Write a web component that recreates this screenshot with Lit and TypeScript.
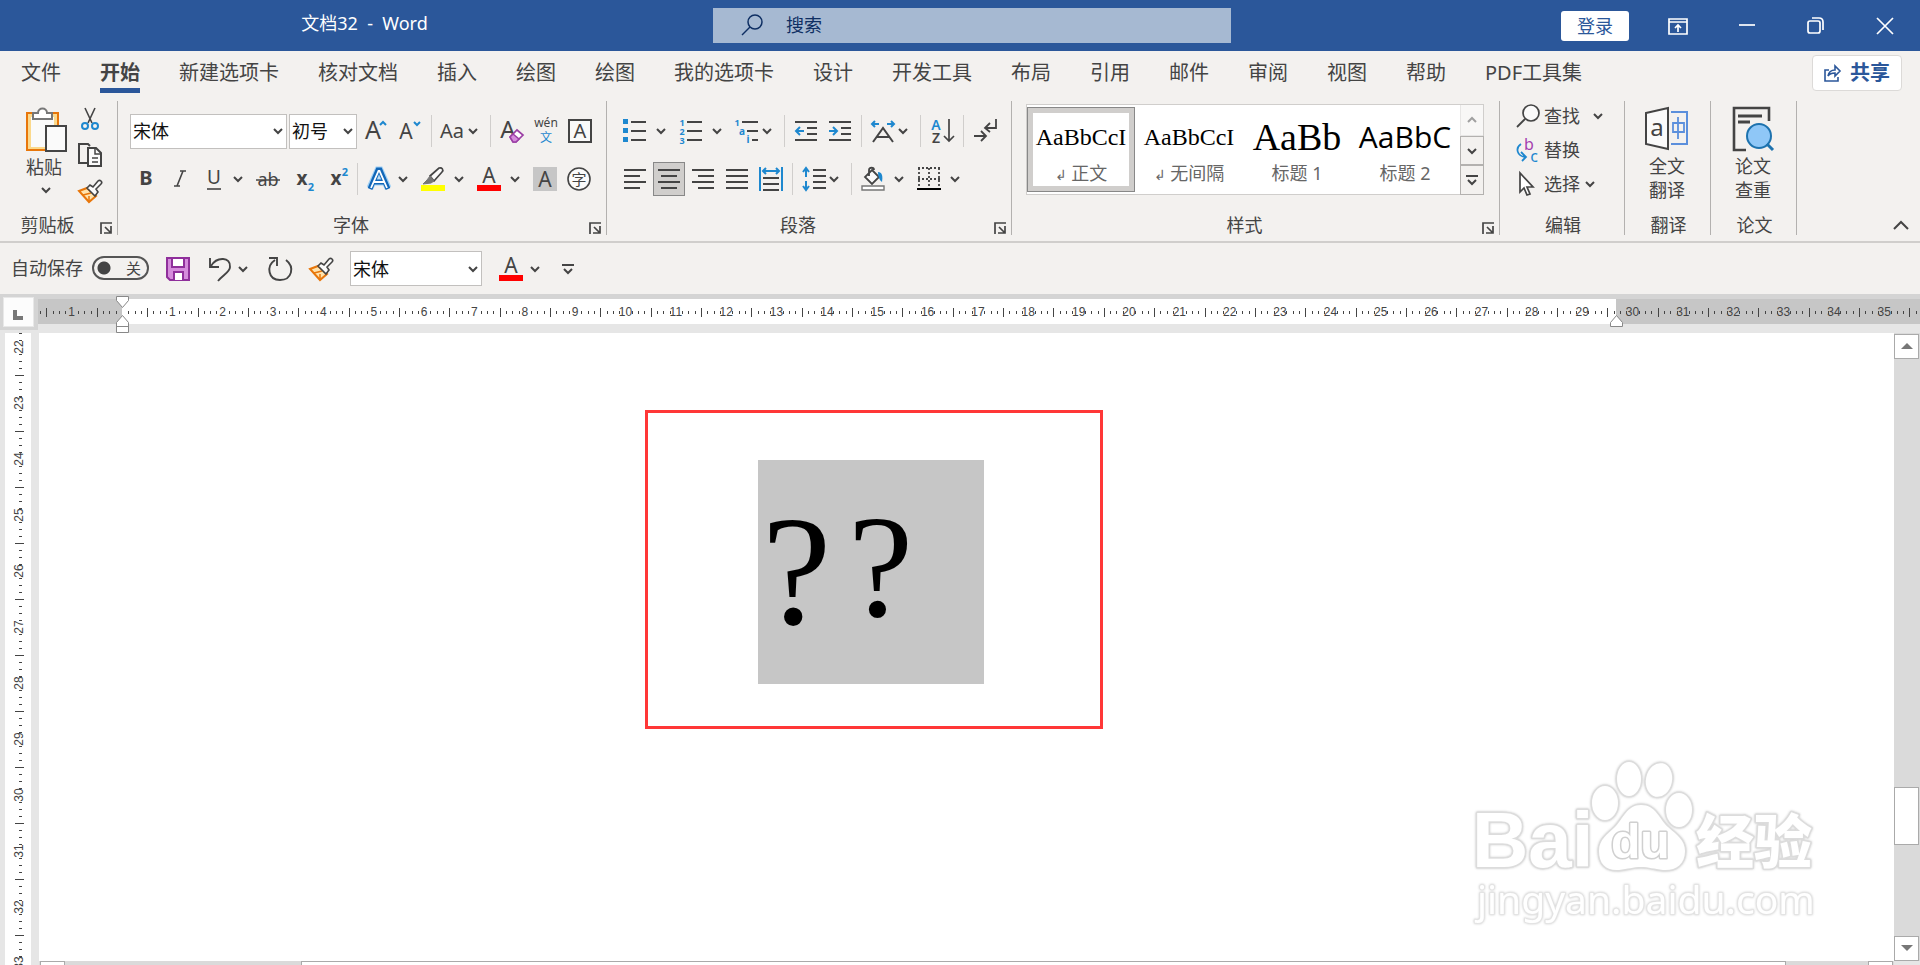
import { LitElement, html, svg, css, type TemplateResult } from "lit";
import { customElement } from "lit/decorators.js";
import { classMap } from "lit/directives/class-map.js";

type Shape = ReturnType<typeof svg>;

const INK = "#444444";
const BLUE = "#1e88cf";

const icon = (body: Shape, w = 24, h = 24) =>
  html`<svg width=${w} height=${h} viewBox="0 0 ${w} ${h}" fill="none" stroke=${INK} stroke-width="2" aria-hidden="true">${body}</svg>`;

const chevron = () => icon(svg`<path d="M2 2l4 4 4-4"/>`, 12, 8);

const letter = (t: string, x: number, y: number, size: number, fill = INK, weight = 400) =>
  svg`<text x=${x} y=${y} font-size=${size} font-weight=${weight} fill=${fill} stroke="none" text-anchor="middle">${t}</text>`;

const lines = (spans: number[][]) => spans.map(([x1, x2, y]) => svg`<path d="M${x1} ${y}H${x2}"/>`);

const ICONS = {
  paste: icon(svg`
    <path d="M2 6h31v37H2z" fill="#fbd98c" stroke="#e8760a" stroke-width="2"/>
    <path d="M6 10h23v30H6z" fill="#fafafa" stroke="none"/>
    <path d="M8 6h5c0-6 9-6 9 0h5v6H8z" fill="#fff" stroke="#777"/>
    <path d="M21 19h20v25H21z" fill="#fafafa"/>`, 42, 45),
  cut: icon(svg`<path d="M7 1l7 15M17 1l-7 15" stroke-width="1.6"/><circle cx="7" cy="19" r="3" stroke=${BLUE}/><circle cx="17" cy="19" r="3" stroke=${BLUE}/>`),
  copy: icon(svg`<path d="M10 20H1V1h9l2 2"/><path d="M10 5h8l5 5v13H10z" fill="#fafafa"/><path d="M17 5v6h6M14 15h6M14 19h6" stroke-width="1.5"/>`),
  brush: icon(svg`<path d="M1 12l8-3 9 8-7 6z" fill="#ffe3ad" stroke="#e8760a"/><path d="M5 16l8-2M11 22v-5" stroke="#e8760a" stroke-width="1.5"/><path d="M9 9l3-3 3 2 5-6c2-2 5 1 3 3l-5 5 2 3-3 4z" fill="#fafafa" stroke-width="1.6"/>`),
  grow: icon(svg`${letter("A", 9, 20, 25)}<path d="M16 6l3-3 3 3" stroke=${BLUE}/>`),
  shrink: icon(svg`${letter("A", 8, 20, 21)}<path d="M16 3l3 3 3-3" stroke=${BLUE}/>`),
  caseAa: icon(svg`${letter("Aa", 11, 19, 20)}`),
  clear: icon(svg`${letter("A", 8, 19, 24)}<path d="M10 18l7-7 6 5-7 7h-3z" fill="#fff" stroke="#9b3fa5" stroke-width="1.7"/><path d="M10 18l3-3 6 5-3 3h-3z" fill="#d58bdc" stroke="#9b3fa5" stroke-width="1.5"/>`),
  phonetic: icon(svg`${letter("wén", 12, 8, 12)}${letter("文", 12, 23, 12, BLUE)}`),
  boxA: icon(svg`<path d="M1 1h22v22H1z" fill="#fafafa"/>${letter("A", 12, 19, 20)}`),
  bold: icon(svg`${letter("B", 12, 18, 20, INK, 700)}`),
  italic: icon(svg`<path d="M12 4h6M6 19h6M15 4l-6 15" stroke-width="1.6"/>`),
  underline: icon(svg`${letter("U", 12, 17, 19)}<path d="M5 22h14" stroke-width="1.6"/>`),
  strike: icon(svg`${letter("ab", 12, 19, 18)}<path d="M0 13h24" stroke-width="1.5"/>`),
  sub: icon(svg`${letter("x", 12, 18, 19, INK, 700)}${letter("2", 21, 24, 11, BLUE, 700)}`),
  sup: icon(svg`${letter("x", 12, 18, 19, INK, 700)}${letter("2", 21, 9, 11, BLUE, 700)}`),
  effect: icon(svg`
    <path d="M3 21L11 3h2l8 18M7 15h10" stroke="#9fd0f5" stroke-width="7"/>
    <path d="M3 22L11 3h2l8 19M7 15h10" stroke="#1267b8" stroke-width="5"/>
    <path d="M4 21L11.500 4h1L20 21M7 15h10" stroke="#fff" stroke-width="1.800"/>`),
  highlight: icon(svg`<path d="M9 9l9-8c3-1 5 2 3 4l-8 9z" fill="#fafafa" stroke-width="1.7"/><path d="M9 9l4 5-3 2-8 1 4-4z" fill="#777" stroke="#777" stroke-width="1"/><path d="M0 18h24v6H0z" fill="#ffff00" stroke="none"/>`),
  color: icon(svg`${letter("A", 12, 16, 21)}<path d="M0 18h24v6H0z" fill="#ff0000" stroke="none"/>`),
  shade: icon(svg`<path d="M0 0h24v24H0z" fill="#c6c6c6" stroke="none"/>${letter("A", 12, 20, 21)}`),
  circled: icon(svg`<circle cx="12" cy="12" r="11" fill="#fafafa" stroke-width="1.6"/>${letter("字", 12, 18, 15)}`),
  bullets: icon(svg`<path d="M0 0h5v5H0zM0 9h5v5H0zM0 18h5v5H0z" fill=${BLUE} stroke="none"/>${lines([[8, 23, 3], [8, 23, 12], [8, 23, 21]])}`),
  numbers: icon(svg`${letter("1", 3, 7, 9, BLUE, 700)}${letter("2", 3, 16, 9, BLUE, 700)}${letter("3", 3, 25, 9, BLUE, 700)}${lines([[8, 23, 3], [8, 23, 12], [8, 23, 21]])}`),
  levels: icon(svg`${letter("1", 2, 7, 9, BLUE, 700)}${letter("a", 7, 16, 10, BLUE, 700)}${letter("i", 13, 24, 10, BLUE, 700)}${lines([[7, 23, 3], [12, 23, 12], [17, 23, 21]])}`),
  dedent: icon(svg`${lines([[1, 23, 3], [13, 23, 9], [13, 23, 15], [1, 23, 21]])}<path d="M10 12H2M6 8l-4 4 4 4" stroke=${BLUE}/>`),
  indent: icon(svg`${lines([[1, 23, 3], [13, 23, 9], [13, 23, 15], [1, 23, 21]])}<path d="M1 12h8M5 8l4 4-4 4" stroke=${BLUE}/>`),
  scale: icon(svg`<path d="M2 23L12 9l10 14M6 18h12"/><path d="M8 5H1M4 2L1 5l3 3M16 5h7M20 2l3 3-3 3" stroke=${BLUE}/>`),
  sort: icon(svg`${letter("A", 6, 11, 14, BLUE, 600)}${letter("Z", 6, 24, 14, INK, 600)}<path d="M19 0v22M14 17l5 5 5-5" stroke-width="1.7"/>`),
  marks: icon(svg`<path d="M23 0v9h-10M17 4l-5 5 5 4M1 17h11M8 12l5 5-5 5" stroke-width="1.8"/>`),
  left: icon(svg`${lines([[1, 23, 3], [1, 17, 9], [1, 23, 15], [1, 17, 21]])}`),
  center: icon(svg`${lines([[1, 23, 3], [4, 20, 9], [1, 23, 15], [4, 20, 21]])}`),
  right: icon(svg`${lines([[1, 23, 3], [7, 23, 9], [1, 23, 15], [7, 23, 21]])}`),
  justify: icon(svg`${lines([[1, 23, 3], [1, 23, 9], [1, 23, 15], [1, 23, 21]])}`),
  spread: icon(svg`${lines([[4, 20, 11], [4, 20, 17], [4, 20, 23]])}<path d="M1 0v24M23 0v24M4 4h16M7 1L4 4l3 3M17 1l3 3-3 3" stroke=${BLUE}/>`),
  spacing: icon(svg`${lines([[11, 24, 3], [11, 24, 9], [11, 24, 15], [11, 24, 21]])}<path d="M4 1v9M4 14v9M1 5l3-4 3 4M1 19l3 4 3-4" stroke=${BLUE}/>`),
  fill: icon(svg`<path d="M11 3l7 7-7 7-7-7zM8 9V3c0-3 5-3 5 0" fill="#fafafa" stroke-width="1.8"/><path d="M17 5c4 0 5 4 4 10-3-2-4-6-4-10z" fill=${BLUE} stroke="none"/><path d="M1 19h22v4H1z" fill="#fff" stroke="#777" stroke-width="1.4"/>`),
  borders: icon(svg`<path d="M1 1h22M1 12h22M2 1v20M12 1v20M22 1v20" stroke-dasharray="2 2" stroke-width="1.8"/><path d="M0 22h24" stroke="#000"/>`),
  find: icon(svg`<circle cx="15" cy="9" r="8" fill="#fafafa" stroke-width="1.7"/><path d="M9 15l-8 8" stroke-width="1.8"/>`),
  replace: icon(svg`${letter("b", 13, 12, 16, "#a43fb0")}${letter("c", 18, 24, 16, BLUE)}<path d="M5 6C-1 10 1 18 9 19M5 14l5 5-4 4" stroke=${BLUE} stroke-width="1.8"/>`),
  select: icon(svg`<path d="M4 1v19l4-4 3 7 3-1-3-7h6z" fill="#fff" stroke-width="1.7"/>`),
  translate: icon(svg`<path d="M1 6l22-5v41L1 37z" fill="#fafafa"/>${letter("a", 12, 29, 24)}<path d="M26 5h16v32H26" stroke="#5b8fdc"/><path d="M28 16h11v9H28zM33 10v22" stroke="#5b8fdc" stroke-width="1.8"/>`, 44, 44),
  paper: icon(svg`<path d="M15 43H3V1h35v13" stroke-width="2.6"/><path d="M7 9h24M7 15h12" stroke-width="3"/><circle cx="28" cy="29" r="12" fill="#8fc7f7" stroke="#1d72ae" stroke-width="2"/><path d="M36 37l6 6" stroke="#1d72ae" stroke-width="3"/>`, 44, 44),
  launcher: icon(svg`<path d="M1 12V1h11M5 5l6 6M11 4v7H4" stroke-width="1.7"/>`, 13, 13),
  save: icon(svg`<path d="M1 1h22v22H4l-3-3z" fill="#d58bdc" stroke="#8f2f9b"/><path d="M6 1h12v9H6zM8 23v-8h9v8" fill="#fff" stroke="#8f2f9b"/>`),
  undo: icon(svg`<path d="M3 1v9h9M4 9C10-1 24 0 23 10c0 5-7 8-12 14" stroke-width="1.9"/>`),
  redo: icon(svg`<path d="M7 3C-2 9 0 23 12 23s15-13 6-20M1 1h8v8" stroke-width="1.9"/>`),
  more: icon(svg`<path d="M1 2h12M3 6l4 4 4-4"/>`, 14, 12),
};

const RULER_UNIT = 50.35;

/* Marks along one axis: number on the unit, long bar on the half, short ticks on the eighths. */
function scaleMarks(first: number, last: number, unit: number, at: (n: number) => number, horizontal: boolean) {
  const out: Shape[] = [];
  for (let e = first * 8; e <= last * 8; e++) {
    const p = at(e / 8);
    const k = ((e % 8) + 8) % 8;
    if (e === 0) continue;
    if (k === 0) {
      out.push(
        horizontal
          ? svg`<text x=${p} y="22" text-anchor="middle">${Math.abs(e / 8)}</text>`
          : svg`<text x="0" y="0" text-anchor="middle" transform="translate(23 ${p}) rotate(-90)">${e / 8}</text>`,
      );
    } else {
      const long = k === 4;
      const q = Math.round(p);
      out.push(
        horizontal
          ? svg`<rect x=${q} y=${long ? 14 : 17} width="1" height=${long ? 9 : 3}/>`
          : svg`<rect x=${long ? 15 : 19} y=${q} width=${long ? 9 : 3} height="1"/>`,
      );
    }
  }
  return out;
}

@customElement("app-root")
export class AppRoot extends LitElement {
  static styles = css`
    :host {
      display: flex;
      flex-direction: column;
      height: 100vh;
      overflow: hidden;
      background: #f3f1ef;
      color: #444;
      font: 18px/24px "Noto Sans", "Noto Sans CJK SC", sans-serif;
    }
    * { box-sizing: border-box; }
    svg { display: block; flex: none; overflow: visible; }
    button, select, input { font: inherit; color: inherit; }
    button {
      display: flex;
      align-items: center;
      justify-content: center;
      padding: 0;
      border: 0;
      background: none;
      white-space: nowrap;
    }
    .titlebar {
      flex: none;
      display: grid;
      grid-template-columns: 713fr 518fr 689fr;
      align-items: center;
      height: 51px;
      background: #2b579a;
      color: #fff;
    }
    .title { padding-left: 16px; padding-bottom: 6px; text-align: center; white-space: pre; }
    .search { display: flex; align-items: center; gap: 23px; height: 35px; margin-bottom: 1px; padding-left: 28px; background: #a6b9d2; color: #0f2f63; }
    .search input { flex: 1; min-width: 0; padding: 0; border: 0; outline: 0; background: none; }
    .search input::placeholder { color: #0f2f63; opacity: 1; }
    .window { display: flex; align-items: center; justify-content: flex-end; }
    .window button { width: 69px; height: 50px; padding-right: 2px; }
    .window .login { width: 68px; height: 30px; margin-right: 15px; padding: 0; border-radius: 3px; background: #fff; color: #2b579a; }
    .tabs { flex: none; display: flex; align-items: flex-start; gap: 39px; height: 50px; padding: 4px 18px 0 21px; font-size: 20px; }
    .tab { height: 38px; line-height: 36px; border-bottom: 5px solid transparent; color: #444; text-decoration: none; white-space: nowrap; }
    .tab.active { border-color: #2b579a; font-weight: 700; }
    .share { gap: 9px; width: 90px; height: 36px; margin-left: auto; border: 1px solid #dcdad8; border-radius: 4px; background: #fff; color: #2b579a; font-weight: 700; }
    .ribbon { flex: none; display: flex; height: 142px; padding-bottom: 6px; border-bottom: 2px solid #d0cecc; }
    .group { flex: none; display: flex; flex-direction: column; border-right: 1px solid #b3b1af; }
    .body { flex: 1; }
    .foot { display: flex; align-items: flex-end; height: 20px; }
    .foot .name { flex: 1; padding-left: 2px; text-align: center; line-height: 20px; white-space: nowrap; }
    .launch { width: 24px; height: 20px; padding-top: 6px; padding-left: 2px; }
    .row { display: flex; align-items: center; gap: 10px; height: 34px; }
    .rows { display: flex; flex-direction: column; gap: 14px; padding: 13px 14px 0 16px; }
    .rows.font { padding: 13px 14px 0 12px; }
    .row.lead { padding-left: 4px; }
    .rule { align-self: stretch; width: 1px; margin: 1px -1px; background: #d0cecc; }
    .tool { width: 24px; height: 32px; }
    .tool.on { width: 32px; height: 34px; margin: 0 -4px; border: 1px solid #888; background: #d0cecc; }
    .split { display: flex; align-items: center; gap: 4px; }
    .split.tight { gap: 0; }
    .split.wide { gap: 6px; }
    .drop { width: 16px; height: 32px; }
    .combos { display: flex; gap: 2px; margin-right: -3px; }
    .combo { display: grid; align-items: center; }
    .combo > * { grid-area: 1 / 1; }
    .combo select { width: 100%; height: 35px; padding: 0 2px; border: 1px solid #c2c0be; border-radius: 0; appearance: none; background: #fff; color: #111; }
    .combo svg { justify-self: end; margin-right: 3px; pointer-events: none; }
    .combo.family { width: 157px; }
    .combo.size { width: 68px; }
    .combo.quick { width: 132px; }
    .clip { display: flex; gap: 11px; padding: 6px 15px 0 25px; }
    .clip .stack { display: flex; flex-direction: column; gap: 12px; }
    .clip .stack button { width: 24px; height: 24px; }
    .paste { flex-direction: column; justify-content: flex-start; width: 42px; }
    .paste span { margin-bottom: 4px; padding-right: 4px; line-height: 30px; }
    .gallery { display: flex; height: 91px; margin: 3px 15px 0 14px; border: 1px solid #d0cecc; background: #fff; }
    .style { flex-direction: column; justify-content: flex-start; width: 108px; height: 85px; margin-top: 2px; padding-top: 10px; color: #000; }
    .style.picked { padding-top: 9px; border: 1px solid #888; outline: 5px solid #d0cecc; outline-offset: -6px; }
    .style .sample { height: 40px; line-height: 40px; }
    .style .caption { color: #666; line-height: 32px; }
    .caption small { font-size: 14px; }
    .serif { font-family: "Liberation Serif", serif; font-size: 24px; }
    .serif.big { font-size: 38px; }
    .light { font-family: "Open Sans", sans-serif; font-size: 30px; }
    .scroller { display: grid; grid-template-rows: 31fr 29fr 29fr; width: 24px; margin: -1px -1px -1px 1px; }
    .scroller button { border: 1px solid #b3b1af; background: #f3f1ef; }
    .scroller button:disabled { border-color: #d0cecc; opacity: 0.5; }
    .edit { display: flex; flex-direction: column; gap: 10px; padding: 3px 18px 0 16px; }
    .edit .row { height: 24px; gap: 4px; }
    .edit .cmd { gap: 4px; height: 24px; }
    .edit .far { margin-left: 6px; }
    .big-tool { flex-direction: column; padding: 6px 21px 0 20px; }
    .big-tool span { padding-top: 3px; }
    .collapse { align-self: flex-end; width: 20px; height: 16px; margin: 0 9px 2px auto; }
    .quickbar { flex: none; display: flex; align-items: center; gap: 17px; height: 51px; padding-left: 11px; }
    .autosave { display: grid; grid-template-columns: auto 57px; column-gap: 9px; align-items: center; padding-bottom: 2px; }
    .autosave input { grid-area: 1 / 2; appearance: none; width: 57px; height: 24px; margin: 0; border: 2px solid #555; border-radius: 12px; background: radial-gradient(circle at 10px 10px, #444 6px, transparent 7px); }
    .autosave .state { grid-area: 1 / 2; justify-self: end; padding-right: 8px; font-size: 15px; pointer-events: none; }
    .ruler { flex: none; display: grid; grid-template-columns: 38px 1fr; height: 39px; overflow: hidden; background: #e6e6e6; font-family: "Liberation Sans", sans-serif; }
    .corner { padding: 3px 4px 0 3px; height: 36px; background: #d4d4d4; }
    .corner button { width: 31px; height: 30px; padding: 6px 2px 0 0; border: 1px solid #e8e8e8; background: #fcfcfc; }
    .ruler svg, .side svg { fill: #444; font-size: 12px; }
    .ruler .off { fill: #c6c6c6; }
    .paper { fill: #fff; }
    .marker { fill: #fff; stroke: #888; }
    .work { flex: 1; min-height: 0; display: grid; grid-template-columns: 39px 1fr 26px; grid-template-rows: minmax(0, 1fr) 4px; background: #e6e6e6; font-family: "Liberation Sans", sans-serif; }
    .side { grid-row: 1 / 3; min-height: 0; overflow: hidden; }
    .document { position: relative; overflow: hidden; padding: 77px 0 0 606px; background: #fff; }
    .callout { width: 458px; height: 319px; padding: 47px 0 0 110px; border: 3px solid #ff3737; }
    .selection { display: flex; gap: 17px; width: 226px; height: 224px; padding: 34px 0 0 4px; background: #c6c6c6; color: #000; font: 156px/1 "Liberation Serif", serif; }
    .selection .small { font-size: 146px; }
    .watermark { position: absolute; right: 64px; bottom: 26px; }
    .vbar { display: flex; flex-direction: column; padding-top: 1px; background: #dadada; }
    .vbar button, .vbar .thumb { flex: none; width: 25px; height: 25px; border: 1px solid #aaa; background: #fff; }
    .vbar .before { flex: 428; }
    .vbar .after { flex: 91; }
    .vbar .thumb { height: 58px; }
    .hbar { display: flex; overflow: hidden; background: #dadada; padding: 0 1px; }
    .hbar div { border: 1px solid #aaa; border-bottom: 0; background: #fff; }
    .hbar .end { width: 25px; }
    .hbar .thumb { flex: 1486; margin-left: 236px; margin-right: 82px; }
    .bend { background: #e6e6e6; }
  `;

  private tool(label: string, pic: TemplateResult, on = false) {
    return html`<button class=${classMap({ tool: true, on })} aria-label=${label}>${pic}</button>`;
  }

  private split(label: string, pic: TemplateResult, spread = "") {
    return html`<div class="split ${spread}">
      ${this.tool(label, pic)}<button class="drop" aria-label="${label}选项">${chevron()}</button>
    </div>`;
  }

  private combo(kind: string, label: string, value: string) {
    return html`<div class="combo ${kind}"><select aria-label=${label}><option>${value}</option></select>${chevron()}</div>`;
  }

  private group(name: string, body: TemplateResult, launcher = true) {
    return html`<section class="group">
      <div class="body">${body}</div>
      <div class="foot">
        <span class="name">${name}</span>
        ${launcher ? html`<button class="launch" aria-label="${name}设置">${ICONS.launcher}</button>` : ""}
      </div>
    </section>`;
  }

  private titlebar() {
    const glyph = (body: Shape) => html`<svg width="20" height="18" viewBox="0 0 20 18" fill="none" stroke="#fff" stroke-width="1.7">${body}</svg>`;
    return html`<header class="titlebar">
      <div class="title">文档32  -  Word</div>
      <label class="search">
        <svg width="22" height="22" viewBox="0 0 22 22" fill="none" stroke="#0f2f63" stroke-width="1.5"><circle cx="14" cy="8" r="7"/><path d="M9 13l-8 8"/></svg>
        <input type="search" placeholder="搜索" aria-label="搜索">
      </label>
      <div class="window">
        <button class="login">登录</button>
        <button aria-label="功能区显示选项">${glyph(svg`<path d="M1 2h18v15H1zM1 5h18M10 15V8M7 11l3-3 3 3"/>`)}</button>
        <button aria-label="最小化">${glyph(svg`<path d="M2 8h16"/>`)}</button>
        <button aria-label="还原">${glyph(svg`<rect x="2" y="4" width="12" height="12" rx="2"/><path d="M6 1h7c3 0 4 1 4 4v8"/>`)}</button>
        <button aria-label="关闭">${glyph(svg`<path d="M2 1l16 16M18 1L2 17"/>`)}</button>
      </div>
    </header>`;
  }

  private tabs() {
    const names = ["文件", "开始", "新建选项卡", "核对文档", "插入", "绘图", "绘图", "我的选项卡", "设计", "开发工具", "布局", "引用", "邮件", "审阅", "视图", "帮助", "PDF工具集"];
    return html`<nav class="tabs">
      ${names.map((n) => html`<a href="#" class=${classMap({ tab: true, active: n === "开始" })}>${n}</a>`)}
      <button class="share">
        <svg width="17" height="18" viewBox="0 0 17 18" fill="none" stroke="#2b579a" stroke-width="1.6"><path d="M5 6H1v11h13v-4M4 12c1-5 4-6 7-6V2l5 5-5 5V9c-3 0-5 0-7 3z"/></svg>共享
      </button>
    </nav>`;
  }

  private ribbon() {
    const I = ICONS;
    const rule = html`<span class="rule"></span>`;
    return html`<div class="ribbon">
      ${this.group("剪贴板", html`<div class="clip">
        <button class="paste">${I.paste}<span>粘贴</span>${chevron()}</button>
        <div class="stack">
          <button aria-label="剪切">${I.cut}</button>
          <button aria-label="复制">${I.copy}</button>
          <button aria-label="格式刷">${I.brush}</button>
        </div>
      </div>`)}
      ${this.group("字体", html`<div class="rows font">
        <div class="row">
          <div class="combos">${this.combo("family", "字体", "宋体")}${this.combo("size", "字号", "初号")}</div>
          ${this.tool("增大字号", I.grow)}${this.tool("减小字号", I.shrink)}${rule}
          ${this.split("更改大小写", I.caseAa, "tight")}${rule}
          ${this.tool("清除格式", I.clear)}${this.tool("拼音指南", I.phonetic)}${this.tool("字符边框", I.boxA)}
        </div>
        <div class="row lead">
          ${this.tool("加粗", I.bold)}${this.tool("倾斜", I.italic)}${this.split("下划线", I.underline)}
          ${this.tool("删除线", I.strike)}${this.tool("下标", I.sub)}${this.tool("上标", I.sup)}${rule}
          ${this.split("文本效果", I.effect)}${this.split("突出显示", I.highlight, "wide")}${this.split("字体颜色", I.color, "wide")}
          ${this.tool("字符底纹", I.shade)}${this.tool("带圈字符", I.circled)}
        </div>
      </div>`)}
      ${this.group("段落", html`<div class="rows">
        <div class="row">
          ${this.split("项目符号", I.bullets, "wide")}${this.split("编号", I.numbers, "wide")}${this.split("多级列表", I.levels, "tight")}${rule}
          ${this.tool("减少缩进", I.dedent)}${this.tool("增加缩进", I.indent)}${rule}
          ${this.split("中文版式", I.scale, "tight")}${rule}${this.tool("排序", I.sort)}${rule}${this.tool("显示标记", I.marks)}
        </div>
        <div class="row">
          ${this.tool("左对齐", I.left)}${this.tool("居中", I.center, true)}${this.tool("右对齐", I.right)}${this.tool("两端对齐", I.justify)}${this.tool("分散对齐", I.spread)}${rule}
          ${this.split("行距", I.spacing, "tight")}${rule}${this.split("底纹", I.fill, "wide")}${this.split("边框", I.borders, "wide")}
        </div>
      </div>`)}
      ${this.group("样式", html`<div class="gallery">
        <button class="style picked"><span class="sample serif">AaBbCcI</span><span class="caption"><small>↲</small> 正文</span></button>
        <button class="style"><span class="sample serif">AaBbCcI</span><span class="caption"><small>↲</small> 无间隔</span></button>
        <button class="style"><span class="sample serif big">AaBb</span><span class="caption">标题 1</span></button>
        <button class="style"><span class="sample light">AaBbC</span><span class="caption">标题 2</span></button>
        <div class="scroller">
          <button disabled aria-label="上一行">${icon(svg`<path d="M2 6l4-4 4 4"/>`, 12, 8)}</button>
          <button aria-label="下一行">${chevron()}</button>
          <button aria-label="其他样式">${I.more}</button>
        </div>
      </div>`)}
      ${this.group("编辑", html`<div class="edit">
        <div class="row"><button class="cmd">${I.find}查找</button><button class="drop far" aria-label="查找选项">${chevron()}</button></div>
        <div class="row"><button class="cmd">${I.replace}替换</button></div>
        <div class="row"><button class="cmd">${I.select}选择${chevron()}</button></div>
      </div>`, false)}
      ${this.group("翻译", html`<button class="big-tool">${I.translate}<span>全文<br>翻译</span></button>`, false)}
      ${this.group("论文", html`<button class="big-tool">${I.paper}<span>论文<br>查重</span></button>`, false)}
      <button class="collapse" aria-label="折叠功能区">${icon(svg`<path d="M1 9l7-7 7 7"/>`, 16, 10)}</button>
    </div>`;
  }

  private quickbar() {
    const I = ICONS;
    return html`<div class="quickbar">
      <label class="autosave">自动保存<input type="checkbox"><span class="state">关</span></label>
      ${this.tool("保存", I.save)}${this.split("撤消", I.undo)}${this.tool("重复", I.redo)}${this.tool("格式刷", I.brush)}
      ${this.combo("quick", "字体", "宋体")}${this.split("字体颜色", I.color)}
      <button class="drop" aria-label="自定义快速访问工具栏">${I.more}</button>
    </div>`;
  }

  private ruler() {
    const zero = 84;
    return html`<div class="ruler">
      <div class="corner"><button aria-label="制表符"><svg width="10" height="10"><path d="M0 0h4v6h6v4H0z" fill="#777"/></svg></button></div>
      <svg width="100%" height="39">
        <rect width="100%" height="5" fill="#d4d4d4"/>
        <rect class="off" y="5" width="100%" height="25"/>
        <rect class="paper" x=${zero} y="5" width="1494" height="25"/>
        ${scaleMarks(-1.625, 35.625, RULER_UNIT, (n) => zero + n * RULER_UNIT, true)}
        <path class="marker" d="M78.5 2.5h12v4l-6 7-6-7zM84.5 21.5l6 7v10h-12v-10zM78.5 32.5h12"/>
        <path class="marker" d="M1578.5 21.5l6 7v4h-12v-4z"/>
      </svg>
    </div>`;
  }

  private workspace() {
    const arrow = (d: string) => html`<svg width="12" height="7"><path d=${d} fill="#777"/></svg>`;
    return html`<main class="work">
      <div class="side"><svg width="39" height="640">
        <rect class="paper" x="5" width="26" height="100%"/>
        ${scaleMarks(21.75, 33.25, 56, (n) => 14 + (n - 22) * 56, false)}
      </svg></div>
      <div class="document">
        <div class="callout"><div class="selection"><span>?</span><span class="small">?</span></div></div>
        ${this.watermark()}
      </div>
      <div class="vbar">
        <button aria-label="向上滚动">${arrow("M0 6l6-6 6 6z")}</button>
        <div class="before"></div><div class="thumb"></div><div class="after"></div>
        <button aria-label="向下滚动">${arrow("M0 0h12l-6 6z")}</button>
      </div>
      <div class="hbar"><div class="end"></div><div class="thumb"></div><div class="end"></div></div>
      <div class="bend"></div>
    </main>`;
  }

  private watermark() {
    return html`<svg class="watermark" width="360" height="180" viewBox="0 0 360 180" fill="#fff" stroke="#dcdcdc" stroke-width="3" paint-order="stroke" stroke-linejoin="round">
      <defs><filter id="soft" x="-5%" y="-5%" width="110%" height="110%"><feDropShadow dx="0" dy="0" stdDeviation="1" flood-color="#ccc"/></filter></defs>
      <g filter="url(#soft)" font-family="Liberation Sans, sans-serif" font-weight="700">
        <text x="2" y="112" font-size="78">Bai</text>
        <ellipse cx="135" cy="48" rx="13" ry="17"/>
        <ellipse cx="159" cy="24" rx="12" ry="17"/>
        <ellipse cx="189" cy="25" rx="13" ry="17" transform="rotate(12 189 25)"/>
        <ellipse cx="209" cy="55" rx="13" ry="17"/>
        <path d="M171 50c15 0 18 14 27 22 9 8 17 13 17 24 0 14-10 20-22 19-9-1-14-3-22-3s-13 2-22 3c-13 1-20-6-20-19 0-12 9-17 16-24 8-8 12-22 26-22z"/>
        <text x="141" y="103" font-size="48" font-weight="700" stroke="#d0d0d0">du</text>
        <text x="226" y="108" font-size="58" font-family="Noto Sans CJK SC, sans-serif" font-weight="900">经验</text>
        <text x="7" y="159" font-size="39" font-family="Noto Sans, sans-serif" font-weight="400" stroke="#e4e4e4" stroke-width="2">jingyan.baidu.com</text>
      </g>
    </svg>`;
  }

  render() {
    return html`${this.titlebar()}${this.tabs()}${this.ribbon()}${this.quickbar()}${this.ruler()}${this.workspace()}`;
  }
}
